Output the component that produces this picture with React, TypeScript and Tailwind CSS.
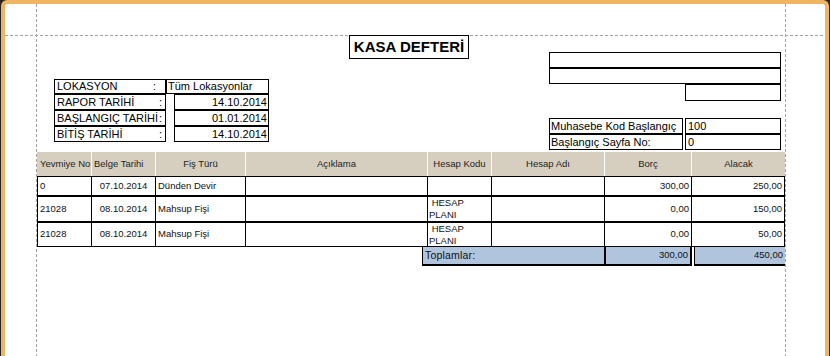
import React from 'react'

// Column setup for the cash book grid
const COLS = [
  { key: 'yevmiye', title: 'Yevmiye No', w: 'w-[55px] border-l', head: 'justify-start pl-[3px]', cell: 'justify-start pl-[2px]' },
  { key: 'belge', title: 'Belge Tarihi', w: 'w-[64px]', head: 'justify-start pl-[2px]', cell: 'justify-center' },
  { key: 'fis', title: 'Fiş Türü', w: 'w-[90px]', head: 'justify-center', cell: 'justify-start pl-[2px]' },
  { key: 'aciklama', title: 'Açıklama', w: 'w-[182px]', head: 'justify-center', cell: 'justify-start pl-[2px]' },
  { key: 'kod', title: 'Hesap Kodu', w: 'w-[64px]', head: 'justify-center', cell: 'justify-start pl-[1px]' },
  { key: 'ad', title: 'Hesap Adı', w: 'w-[113px]', head: 'justify-center', cell: 'justify-start pl-[2px]' },
  { key: 'borc', title: 'Borç', w: 'w-[87px]', head: 'justify-center', cell: 'justify-end pr-[2px]' },
  { key: 'alacak', title: 'Alacak', w: 'w-[93px]', head: 'justify-center', cell: 'justify-end pr-[2px]' },
] as const

type Row = Record<string, string>

const ROWS: { data: Row; cls: string }[] = [
  {
    data: { yevmiye: '0', belge: '07.10.2014', fis: 'Dünden Devir', aciklama: '', kod: '', ad: '', borc: '300,00', alacak: '250,00' },
    cls: 'h-[20px] border-b-2',
  },
  {
    data: { yevmiye: '21028', belge: '08.10.2014', fis: 'Mahsup Fişi', aciklama: '', kod: 'HESAP PLANI', ad: '', borc: '0,00', alacak: '150,00' },
    cls: 'h-[26px] border-b-2',
  },
  {
    data: { yevmiye: '21028', belge: '08.10.2014', fis: 'Mahsup Fişi', aciklama: '', kod: 'HESAP PLANI', ad: '', borc: '0,00', alacak: '50,00' },
    cls: 'h-[24px] border-b',
  },
]

const INFO = [
  { label: 'RAPOR TARİHİ', value: '14.10.2014' },
  { label: 'BAŞLANGIÇ TARİHİ', value: '01.01.2014' },
  { label: 'BİTİŞ TARİHİ', value: '14.10.2014' },
]

function InfoTable() {
  return (
    <div className="ml-[17px] mt-[44px] w-[215px] text-[11px] leading-none text-black">
      <div className="flex h-[15px]">
        <div className="w-[112px] border border-black flex items-center justify-between pl-[2px] pr-[9px]">
          <span>LOKASYON</span>
          <span>:</span>
        </div>
        <div className="w-[103px] border border-black flex items-center pl-[1px]">Tüm Lokasyonlar</div>
      </div>
      {INFO.map((r) => (
        <div key={r.label} className="flex h-[16px]">
          <div className="w-[112px] border border-black flex items-center justify-between pl-[2px] pr-[3px]">
            <span>{r.label}</span>
            <span>:</span>
          </div>
          <div className="w-[8px]" />
          <div className="w-[95px] border border-black flex items-center justify-end pr-[1px]">{r.value}</div>
        </div>
      ))}
    </div>
  )
}

function RightBoxes() {
  return (
    <div className="ml-[80px] mt-[17px] w-[232px] text-[11px] leading-none text-black">
      <div className="h-[16px] border border-black" />
      <div className="h-[16px] border border-black" />
      <div className="ml-auto h-[17px] w-[96px] border border-black" />
      <div className="mt-[17px]">
        <div className="flex h-[16px] gap-[2px]">
          <div className="w-[134px] border border-black flex items-center pl-[1px]">Muhasebe Kod Başlangıç</div>
          <div className="w-[96px] border border-black flex items-center pl-[2px]">100</div>
        </div>
        <div className="flex h-[16px] gap-[2px]">
          <div className="w-[134px] border border-black flex items-center pl-[1px]">Başlangıç Sayfa No:</div>
          <div className="w-[96px] border border-black flex items-center pl-[2px]">0</div>
        </div>
      </div>
    </div>
  )
}

export default function App() {
  return (
    <div className="w-[830px] h-[356px] overflow-hidden bg-[#262626] px-px font-['Liberation_Sans',Arial,sans-serif]">
      <div className="relative h-full rounded-t-[6px] border-x-4 border-t-4 border-[#f0b462] bg-white">
        {/* designer margin guides */}
        <div className="absolute left-[31px] top-0 bottom-0 w-px bg-[repeating-linear-gradient(to_bottom,#a3a3a3_0_3px,transparent_3px_5px)]" />
        <div className="absolute left-[780px] top-0 bottom-0 w-px bg-[repeating-linear-gradient(to_bottom,#a3a3a3_0_3px,transparent_3px_5px)]" />
        <div className="absolute left-0 right-0 top-[31px] h-px bg-[repeating-linear-gradient(to_right,#a3a3a3_0_3px,transparent_3px_5px)]" />

        <div className="relative pl-[32px] pt-[31px]">
          {/* report header */}
          <div className="flex h-[117px] items-start">
            <InfoTable />
            <div className="ml-[80px] flex h-[24px] w-[120px] items-center justify-center border border-black bg-white text-[15px] font-bold text-black">
              KASA DEFTERİ
            </div>
            <RightBoxes />
          </div>

          {/* column titles */}
          <div className="flex h-[24px] w-[748px] bg-[#d6cebf] text-[9.5px] text-[#1e1e1e]">
            {COLS.map((c, i) => (
              <div
                key={c.key}
                className={`${c.w.replace(' border-l', '')} ${c.head} flex items-center ${i < COLS.length - 1 ? 'border-r border-white' : ''}`}
              >
                {c.title}
              </div>
            ))}
          </div>

          {/* detail rows */}
          <div className="w-[748px] border-t border-black text-[9.5px] text-[#111]">
            {ROWS.map((r, ri) => (
              <div key={ri} className={`flex border-black ${r.cls}`}>
                {COLS.map((c) => (
                  <div key={c.key} className={`${c.w} ${c.cell} flex border-r border-black`}>
                    {c.key === 'kod' && r.data.kod ? (
                      <div className="self-start leading-[12px]">
                        <div>&nbsp;HESAP</div>
                        <div>PLANI</div>
                      </div>
                    ) : (
                      <span className="self-center">{r.data[c.key]}</span>
                    )}
                  </div>
                ))}
              </div>
            ))}
          </div>

          {/* totals */}
          <div className="ml-[385px] flex h-[19px] text-[9.5px] text-[#111]">
            <div className="flex w-[184px] items-center border-b-2 border-l border-r-2 border-black bg-[#b0c4de] pl-[2px] text-[10.5px] tracking-[0.2px]">
              Toplamlar:
            </div>
            <div className="flex w-[86px] items-center justify-end border-b-2 border-r-2 border-black bg-[#b0c4de] pr-[2px]">
              300,00
            </div>
            <div className="ml-[2px] flex w-[91px] items-center justify-end border-b-2 border-l border-black bg-[#b0c4de] pr-[2px]">
              450,00
            </div>
          </div>
        </div>
      </div>
    </div>
  )
}
